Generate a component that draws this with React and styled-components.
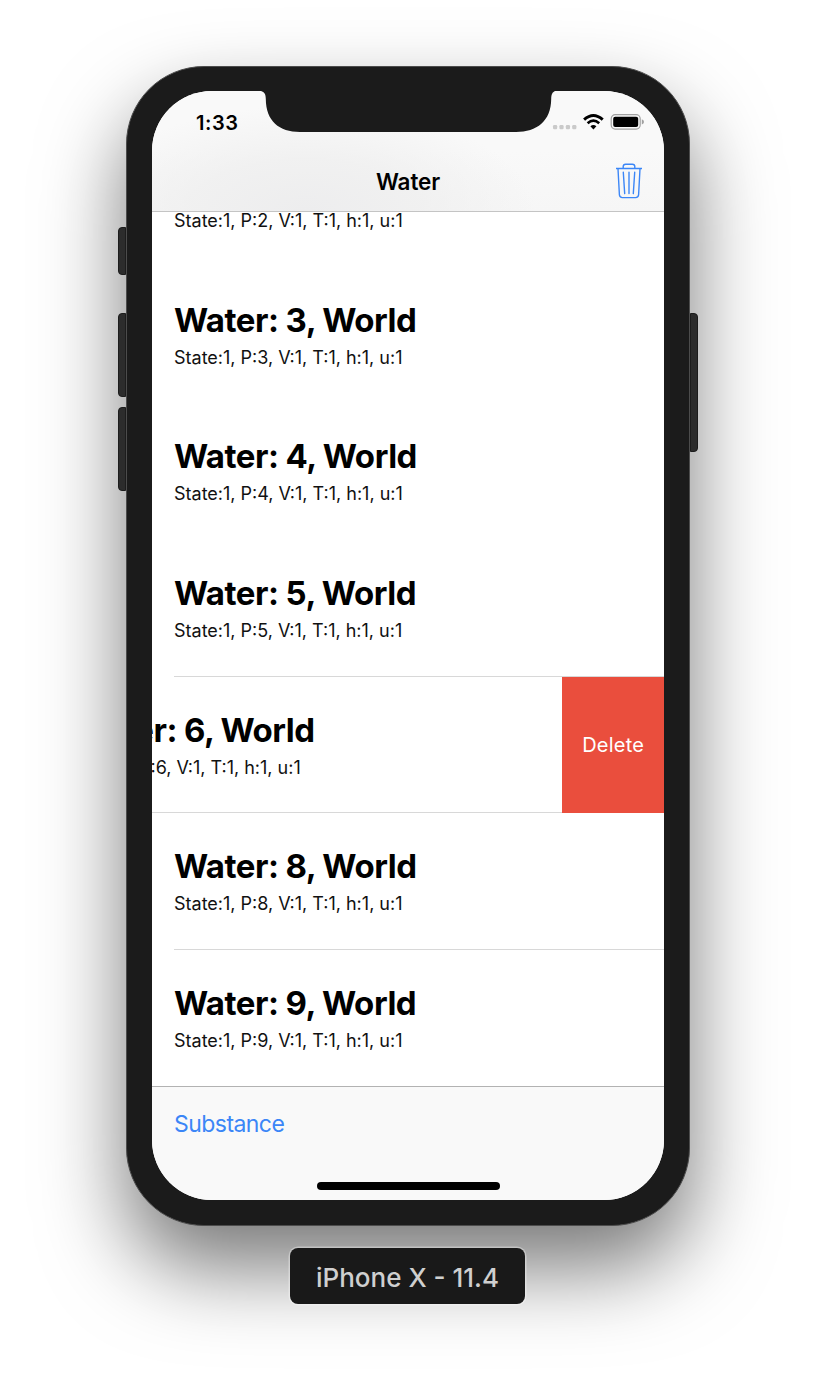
import React from "react";
import styled, { createGlobalStyle } from "styled-components";

const GlobalStyle = createGlobalStyle`
  html, body { margin: 0; background: #fff; }
  body { font-family: Inter, "Liberation Sans", sans-serif; color: #000; }
  *, *::before, *::after { box-sizing: border-box; }
`;

const Stage = styled.main`
  height: 1388px;
  overflow: hidden;
  display: flex;
  flex-direction: column;
  align-items: center;
  padding-top: 66px;
`;

const Phone = styled.div`
  position: relative;
  width: 564px;
  height: 1160px;
  flex: none;
  border-radius: 78px;
  background: #1b1b1b;
  border: 1px solid #4c4c4c;
  padding: 24px 25px 25px;
  box-shadow: 0 42px 84px rgba(0, 0, 0, 0.53);
`;

const SideButton = styled.span`
  position: absolute;
  top: ${(p) => p.$top}px;
  ${(p) => p.$side}: -9px;
  width: 8px;
  height: ${(p) => p.$height}px;
  background: #2c2c2c;
  border: 1px solid #1c1c1c;
  border-radius: ${(p) => (p.$side === "left" ? "4px 0 0 4px" : "0 4px 4px 0")};
`;

const Screen = styled.div`
  position: relative;
  width: 512px;
  height: 1109px;
  overflow: hidden;
  border-radius: 60px;
  background: #fff;
  display: flex;
  flex-direction: column;
`;

const Notch = styled.svg`
  position: absolute;
  top: 0;
  left: 104px;
`;

const Header = styled.header`
  flex: none;
  height: 121px;
  border-bottom: 1px solid #c4c4c4;
  background:
    radial-gradient(ellipse 230px 105px at 30% 100%, #ededee 0%, rgba(239, 239, 239, 0.8) 50%, rgba(249, 249, 249, 0) 100%),
    linear-gradient(#f9f9f9 50%, #f6f6f6);
`;

const StatusBar = styled.div`
  height: 61px;
  padding: 3px 20px 0 44px;
  display: flex;
  align-items: center;
  justify-content: space-between;
`;

const Clock = styled.span`
  font-size: 20px;
  line-height: 24px;
  font-weight: 600;
  letter-spacing: 0.6px;
`;

const StatusIcons = styled.svg`
  display: block;
  margin-bottom: 2px;
`;

const NavBar = styled.div`
  height: 58px;
  display: grid;
  grid-template-columns: 1fr auto 1fr;
  align-items: center;
  padding: 1px 21px 0 21px;
`;

const NavTitle = styled.h1`
  grid-column: 2;
  margin: 0;
  font-size: 22.5px;
  line-height: 28px;
  font-weight: 600;
  letter-spacing: -0.1px;
`;

const TrashButton = styled.button`
  justify-self: end;
  padding: 0;
  margin-bottom: 2px;
  border: 0;
  background: none;
  display: flex;
`;

const List = styled.section`
  flex: 1;
  min-height: 0;
  overflow: hidden;
`;

const Row = styled.div`
  height: 136.6px;
  display: flex;
  justify-content: flex-end;
`;

const RowContent = styled.div`
  width: 512px;
  flex: none;
  height: 100%;
  padding: 32px 0 0 22px;
  white-space: nowrap;
  background: ${(p) => (p.$line ? "linear-gradient(#d8d8d8, #d8d8d8) no-repeat" : "none")};
  background-size: 100% 1px;
  background-position: ${(p) => (p.$inset ? "22px" : "0")} calc(100% - 0.1px);
`;

const RowTitle = styled.h2`
  margin: 0;
  font-size: 33px;
  line-height: 42px;
  font-weight: 700;
  letter-spacing: -0.47px;
  word-spacing: -0.4px;
`;

const RowDetail = styled.p`
  margin: 6px 0 0;
  font-size: 18px;
  line-height: 22px;
  color: #111;
`;

const PartialRow = styled.div`
  height: 54.9px;
  padding-left: 22px;

  ${RowDetail} {
    margin: 0;
    line-height: 18px;
  }
`;

const DeleteAction = styled.button`
  flex: none;
  width: 101.6px;
  height: 136px;
  margin: 0;
  padding: 0;
  border: 0;
  background: #ea4e3d;
  color: #fff;
  font: 400 20px/26px Inter, "Liberation Sans", sans-serif;
  letter-spacing: 0.25px;
`;

const Toolbar = styled.footer`
  flex: none;
  height: 114px;
  border-top: 1px solid #b2b2b2;
  background: #f9f9f9;
  padding: 22px 22px 0;
  display: flex;
  flex-direction: column;
  align-items: flex-start;
`;

const ToolbarButton = styled.button`
  margin: 0;
  padding: 0;
  border: 0;
  background: none;
  color: #3b86f7;
  font: 400 23px/30px Inter, "Liberation Sans", sans-serif;
  letter-spacing: -0.55px;
`;

const HomeIndicator = styled.span`
  align-self: center;
  margin: 43px 0 0 1px;
  width: 183px;
  height: 7.5px;
  border-radius: 4px;
  background: #000;
`;

const DeviceLabel = styled.div`
  position: relative;
  margin-top: 22px;
  margin-right: 1px;
  width: 235px;
  height: 56px;
  flex: none;
  display: flex;
  align-items: center;
  justify-content: center;
  padding-top: 3px;
  border-radius: 8px;
  background: #191919;
  box-shadow: 0 0 0 1.5px rgba(255, 255, 255, 0.35);
  color: #cfcfcf;
  font-size: 26px;
  line-height: 32px;
  font-weight: 500;
`;

const ROWS = [
  { n: 3 },
  { n: 4 },
  { n: 5, line: true, inset: true },
  { n: 6, line: true, swiped: true },
  { n: 8, line: true, inset: true },
  { n: 9 },
];

const BUTTONS = [
  { side: "left", top: 160, height: 48 },
  { side: "left", top: 246, height: 84 },
  { side: "left", top: 340, height: 84 },
  { side: "right", top: 246, height: 139 },
];

function TrashIcon() {
  return (
    <svg width="28" height="36" viewBox="0 0 28 36" fill="none" stroke="#3b86f7" strokeWidth="1.4">
      <path d="M1 5.5H27M8.2 5.3V3.6Q8.2 1.2 10.6 1.2H17.4Q19.8 1.2 19.8 3.6V5.3" />
      <path d="M3 5.8L4.4 31.8Q4.6 34.6 7.4 34.6H20.6Q23.4 34.6 23.6 31.8L25 5.8" />
      <path d="M8.3 9.2L9.7 30.6M14 9.2V30.6M19.7 9.2L18.3 30.6" strokeLinecap="round" />
    </svg>
  );
}

function StatusGlyphs() {
  return (
    <StatusIcons width="92" height="18" viewBox="0 0 92 18">
      <g fill="#cacaca">
        {[1, 7.4, 13.8, 20.2].map((x) => (
          <rect key={x} x={x} y="12" width="4.2" height="4.2" rx="1.2" />
        ))}
      </g>
      <g fill="none" stroke="#000">
        <path d="M32.1 6.7Q41.4 -1.7 50.7 6.7" strokeWidth="3" />
        <path d="M35.6 10.2Q41.4 5.2 47.2 10.2" strokeWidth="2.7" />
      </g>
      <path d="M38.4 13.3Q41.4 10.9 44.4 13.3L41.4 16.6Z" />
      <rect x="59.2" y="1.7" width="29" height="14.4" rx="4" fill="none" stroke="#a1a1a1" strokeWidth="1.2" />
      <rect x="61.2" y="3.8" width="25" height="10.2" rx="2" />
      <path d="M89.8 6.3Q92 7 92 8.9T89.8 11.5Z" fill="#a1a1a1" />
    </StatusIcons>
  );
}

export default function App() {
  return (
    <>
      <GlobalStyle />
      <Stage>
        <Phone>
          {BUTTONS.map((b) => (
            <SideButton key={b.side + b.top} $side={b.side} $top={b.top} $height={b.height} />
          ))}
          <Screen>
            <Header>
              <StatusBar>
                <Clock>1:33</Clock>
                <StatusGlyphs />
              </StatusBar>
              <NavBar>
                <NavTitle>Water</NavTitle>
                <TrashButton aria-label="Delete all">
                  <TrashIcon />
                </TrashButton>
              </NavBar>
            </Header>
            <List>
              <PartialRow>
                <RowDetail>State:1, P:2, V:1, T:1, h:1, u:1</RowDetail>
              </PartialRow>
              {ROWS.map((r) => (
                <Row key={r.n}>
                  <RowContent $line={r.line} $inset={r.inset}>
                    <RowTitle>Water: {r.n}, World</RowTitle>
                    <RowDetail>State:1, P:{r.n}, V:1, T:1, h:1, u:1</RowDetail>
                  </RowContent>
                  {r.swiped && <DeleteAction>Delete</DeleteAction>}
                </Row>
              ))}
            </List>
            <Toolbar>
              <ToolbarButton>Substance</ToolbarButton>
              <HomeIndicator />
            </Toolbar>
            <Notch width="304" height="41" viewBox="0 0 304 41" fill="#1b1b1b">
              <path d="M4.5 0H299.5C296.5 0.8 295.3 3 295.2 8C295 30 281 41 260 41H44C23 41 10 30 9.8 8C9.7 3 8.5 0.8 4.5 0Z" />
            </Notch>
          </Screen>
        </Phone>
        <DeviceLabel>iPhone X - 11.4</DeviceLabel>
      </Stage>
    </>
  );
}
